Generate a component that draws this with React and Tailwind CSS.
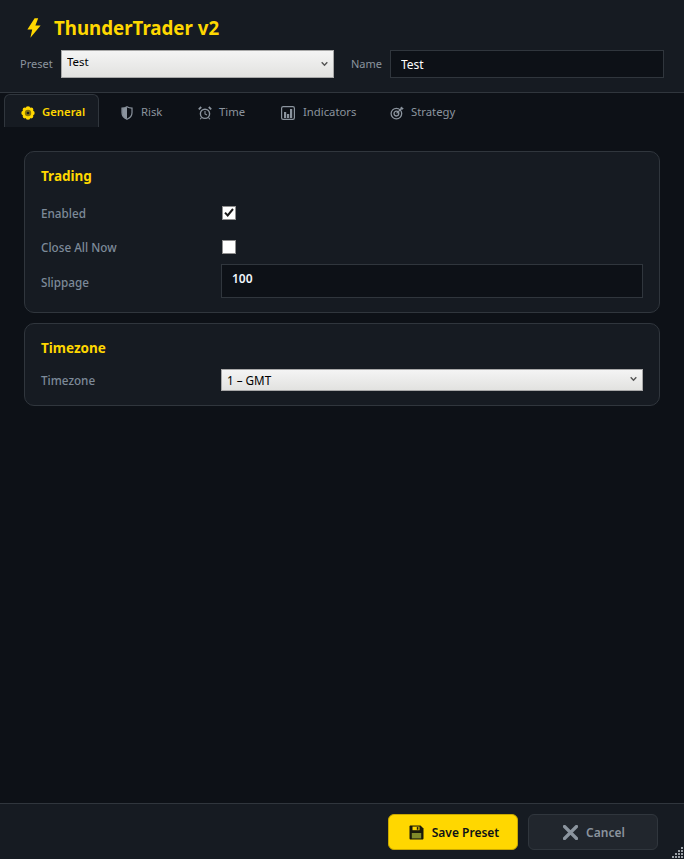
import React from "react"

const font = "font-['Noto_Sans','Open_Sans',sans-serif]"

function Bolt() {
  return (
    <svg width="16" height="20" viewBox="0 0 16 20" className="shrink-0">
      <path d="M8.6 0.3 L1.4 11.4 H6.2 L4.4 19.7 L14.6 7.6 H9.4 L12.2 0.3 Z" fill="#ffd700" />
    </svg>
  )
}

function GeneralIcon() {
  return (
    <svg width="14" height="14" viewBox="0 0 14 14" className="shrink-0">
      <g fill="#ffd700">
        <circle cx="7" cy="2.6" r="2.3" />
        <circle cx="7" cy="11.4" r="2.3" />
        <circle cx="2.6" cy="7" r="2.3" />
        <circle cx="11.4" cy="7" r="2.3" />
        <circle cx="3.9" cy="3.9" r="2.3" />
        <circle cx="10.1" cy="3.9" r="2.3" />
        <circle cx="3.9" cy="10.1" r="2.3" />
        <circle cx="10.1" cy="10.1" r="2.3" />
      </g>
      <circle cx="7" cy="7" r="3.2" fill="#8a7508" />
      <circle cx="7" cy="7" r="1.3" fill="#161b22" />
    </svg>
  )
}

function RiskIcon() {
  return (
    <svg width="12" height="14" viewBox="0 0 12 14" className="shrink-0">
      <path d="M6 0.7 C4.4 1.6 2.7 2 1 2.1 V6.8 C1 9.8 3 12 6 13.3 C9 12 11 9.8 11 6.8 V2.1 C9.3 2 7.6 1.6 6 0.7 Z" fill="none" stroke="#8b949e" strokeWidth="1.2" />
      <path d="M6 1 C4.4 1.8 2.8 2.2 1.2 2.3 V6.8 C1.2 9.6 3.2 11.8 6 13 Z" fill="#8b949e" />
    </svg>
  )
}

function TimeIcon() {
  return (
    <svg width="14" height="14" viewBox="0 0 14 14" className="shrink-0" fill="none" stroke="#8b949e">
      <circle cx="7" cy="7.8" r="4.6" strokeWidth="1.4" />
      <path d="M7 5 V8 L9 9" strokeWidth="1.1" />
      <path d="M0.8 3.4 L3.2 1 M13.2 3.4 L10.8 1" strokeWidth="1.8" />
      <path d="M3.5 11.5 L2.2 13.3 M10.5 11.5 L11.8 13.3" strokeWidth="1.1" />
    </svg>
  )
}

function IndicatorsIcon() {
  return (
    <svg width="14" height="14" viewBox="0 0 14 14" className="shrink-0">
      <rect x="0.6" y="0.6" width="12.8" height="12.8" rx="1.6" fill="none" stroke="#8b949e" strokeWidth="1.2" />
      <rect x="3" y="6" width="2.2" height="6" fill="#8b949e" />
      <rect x="6" y="8" width="2.2" height="4" fill="#8b949e" />
      <rect x="9" y="3" width="2.2" height="9" fill="#8b949e" />
    </svg>
  )
}

function StrategyIcon() {
  return (
    <svg width="14" height="14" viewBox="0 0 14 14" className="shrink-0" fill="none" stroke="#8b949e">
      <circle cx="6.4" cy="7.6" r="5.3" strokeWidth="1.3" />
      <circle cx="6.4" cy="7.6" r="2.4" strokeWidth="1.3" />
      <path d="M6.6 7.4 L12 2" strokeWidth="1.3" />
      <path d="M10 2 L12 0.4 L12.4 1.8 L13.8 2.2 L12 4 Z" fill="#8b949e" stroke="none" />
    </svg>
  )
}

function SaveIcon() {
  return (
    <svg width="15" height="15" viewBox="0 0 15 15" className="shrink-0">
      <path d="M1.5 0.5 H11.5 L14.5 3.5 V13.5 C14.5 14 14 14.5 13.5 14.5 H1.5 C1 14.5 0.5 14 0.5 13.5 V1.5 C0.5 1 1 0.5 1.5 0.5 Z" fill="#1a1a0a" />
      <rect x="3.5" y="1.6" width="7" height="3.6" fill="#ffd700" />
      <rect x="7.8" y="2.1" width="1.6" height="2.6" fill="#1a1a0a" />
      <rect x="2.8" y="8" width="9.4" height="5.4" fill="#7f8a2a" />
    </svg>
  )
}

function CancelIcon() {
  return (
    <svg width="15" height="15" viewBox="0 0 15 15" className="shrink-0">
      <path d="M1.5 1.5 L13.5 13.5 M13.5 1.5 L1.5 13.5" stroke="#8b949e" strokeWidth="3.2" strokeLinecap="round" />
    </svg>
  )
}

function Chevron() {
  return (
    <svg width="7" height="5" viewBox="0 0 7 5" className="absolute right-[6px] top-1/2 -translate-y-1/2 pointer-events-none">
      <path d="M0.7 0.8 L3.5 3.8 L6.3 0.8" fill="none" stroke="#555" strokeWidth="1.4" />
    </svg>
  )
}

function Grip() {
  const dots = [
    [9, 0], [6, 3], [9, 3], [3, 6], [6, 6], [9, 6], [0, 9], [3, 9], [6, 9], [9, 9],
  ]
  return (
    <svg width="11" height="11" viewBox="0 0 11 11" className="absolute right-[1px] bottom-[1px]">
      {dots.map(([x, y]) => (
        <rect key={`${x}-${y}`} x={x} y={y} width="2" height="2" fill="#9aa0a6" />
      ))}
    </svg>
  )
}

const tabs = [
  { name: "Risk", icon: <RiskIcon />, className: "w-[77px] ml-[5px] gap-[8px]" },
  { name: "Time", icon: <TimeIcon />, className: "w-[83px] gap-[7px]" },
  { name: "Indicators", icon: <IndicatorsIcon />, className: "w-[109px] gap-[8px]" },
  { name: "Strategy", icon: <StrategyIcon />, className: "w-[100px] gap-[7px]" },
]

function Card({ title, className, children }) {
  return (
    <div className={`bg-[#161b22] border border-[#30363d] rounded-[10px] px-[16px] ${className}`}>
      <h3 className="text-[13.5px] font-bold text-[#ffd700] leading-[18px]">{title}</h3>
      {children}
    </div>
  )
}

function Row({ label, className, labelClassName = "pt-[2px]", children }) {
  return (
    <div className={`grid grid-cols-[180px_1fr] items-center ${className}`}>
      <span className={`text-[11.7px] font-medium text-[#7d8a99] ${labelClassName}`}>{label}</span>
      {children}
    </div>
  )
}

export default function App() {
  return (
    <div className={`${font} h-[859px] w-full flex flex-col bg-[#0d1117] relative overflow-hidden`}>
      <header className="h-[93px] shrink-0 bg-[#161b22] border-b border-[#30363d] pt-[18px]">
        <div className="flex items-center gap-[12px] pl-[26px] h-[20px]">
          <Bolt />
          <h1 className="text-[18.7px] font-bold text-[#ffd700] leading-[20px]">ThunderTrader v2</h1>
        </div>
        <div className="flex items-center mt-[12px] pl-[20px] text-[11px]">
          <label className="text-[#8b949e] w-[41px]">Preset</label>
          <div className="relative w-[273px]">
            <select className="w-full h-[28px] appearance-none border border-[#a8a8a8] bg-gradient-to-b from-[#f4f4f4] to-[#e2e2e0] text-black text-[11.5px] pl-[5px] pb-[4px] rounded-none outline-none" defaultValue="Test">
              <option>Test</option>
            </select>
            <Chevron />
          </div>
          <label className="text-[#8b949e] ml-[17px] w-[39px]">Name</label>
          <input defaultValue="Test" className="w-[274px] h-[28px] bg-[#0d1117] border border-[#30363d] text-white text-[12px] pl-[10px] outline-none" />
        </div>
      </header>

      <nav className="h-[34px] shrink-0 flex items-start pl-[4px] pt-[1px] text-[11.3px]">
        <div className="w-[95px] h-[33px] flex items-center gap-[7px] pl-[16px] pt-[3px] bg-[#161b22] border border-b-0 border-[#30363d] rounded-t-[6px] text-[#ffd700] font-semibold">
          <GeneralIcon />
          <span>General</span>
        </div>
        {tabs.map((tab) => (
          <div key={tab.name} className={`h-[33px] flex items-center pl-[17px] pt-[4px] text-[#8b949e] ${tab.className}`}>
            {tab.icon}
            <span>{tab.name}</span>
          </div>
        ))}
      </nav>

      <main className="flex-1 px-[24px] pt-[24px] flex flex-col gap-[10px]">
        <Card title="Trading" className="h-[162px] pt-[15px]">
          <Row label="Enabled" className="h-[14px] mt-[18px]">
            <span className="ml-[1px] w-[14px] h-[14px] bg-white border border-[#8f8f8f] flex items-center justify-center">
              <svg width="10" height="9" viewBox="0 0 10 9">
                <path d="M1 4.6 L3.7 7.4 L9 1" fill="none" stroke="#1a1a1a" strokeWidth="2" />
              </svg>
            </span>
          </Row>
          <Row label="Close All Now" className="h-[14px] mt-[20px]">
            <span className="ml-[1px] w-[14px] h-[14px] bg-white border border-[#8f8f8f]" />
          </Row>
          <Row label="Slippage" className="h-[34px] mt-[13px]" labelClassName="pt-[4px]">
            <input defaultValue="100" className="w-full h-[34px] bg-[#0d1117] border border-[#30363d] text-[#f0f6fc] text-[12px] font-semibold pl-[10px] pb-[6px] outline-none" />
          </Row>
        </Card>
        <Card title="Timezone" className="h-[83px] pt-[15px]">
          <Row label="Timezone" className="h-[22px] mt-[10px]" labelClassName="pt-[4px]">
            <div className="relative">
              <select className="w-full h-[22px] appearance-none border border-[#a8a8a8] bg-gradient-to-b from-[#f4f4f4] to-[#e2e2e0] text-black text-[11.7px] pl-[5px] pt-[1px] rounded-none outline-none" defaultValue="1 – GMT">
                <option>1 – GMT</option>
              </select>
              <Chevron />
            </div>
          </Row>
        </Card>
      </main>

      <footer className="h-[56px] shrink-0 bg-[#161b22] border-t border-[#30363d] flex justify-end items-start gap-[10px] pt-[10px] pr-[26px] text-[12px] font-semibold">
        <button className="w-[130px] h-[36px] flex items-center justify-center gap-[8px] pl-[2px] pt-[1px] bg-[#ffd700] border border-[#c9a800] rounded-[6px] text-[#0d1117]">
          <SaveIcon />
          Save Preset
        </button>
        <button className="w-[130px] h-[36px] flex items-center justify-center gap-[8px] pl-[2px] pt-[1px] bg-[#21262d] border border-[#30363d] rounded-[6px] text-[#8b949e]">
          <CancelIcon />
          Cancel
        </button>
      </footer>
      <Grip />
    </div>
  )
}
